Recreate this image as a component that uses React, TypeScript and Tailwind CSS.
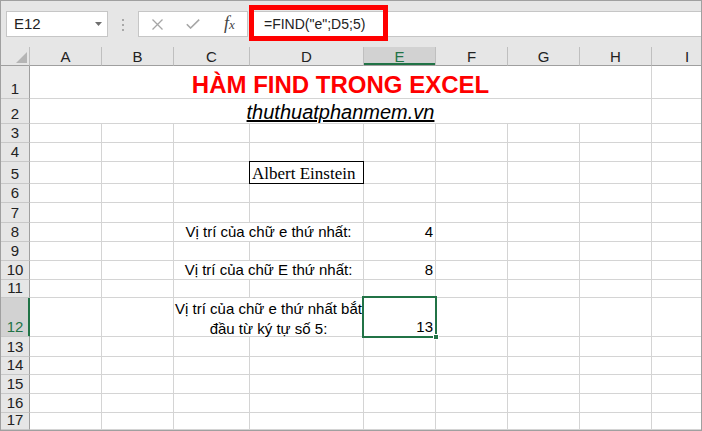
import type { ReactNode } from "react";

const COLS = ["A", "B", "C", "D", "E", "F", "G", "H", "I"];
const ROWS = Array.from({ length: 17 }, (_, i) => i + 1);

type CellProps = {
  last?: boolean;
  span?: number;
  className?: string;
  children?: ReactNode;
};

function Cell({ last = false, span = 1, className = "", children }: CellProps) {
  return (
    <div
      className={`${last ? "" : "border-r"} border-b border-[#d4d4d4] bg-white ${
        span === 8 ? "col-span-8" : span === 2 ? "col-span-2" : ""
      } ${className}`}
    >
      {children}
    </div>
  );
}

function RowHead({ n, active = false }: { n: number; active?: boolean }) {
  return (
    <div
      className={`flex items-end justify-center border-b border-b-[#c8c8c8] text-[15px] leading-[18px] ${
        active
          ? "bg-[#d2d2d2] border-r border-r-[#217346] shadow-[inset_-1px_0_0_#217346] text-[#217346]"
          : "bg-[#e6e6e6] border-r border-r-[#9f9f9f] text-[#222]"
      }`}
    >
      {n}
    </div>
  );
}

function ColHead({ label }: { label: string }) {
  const active = label === "E";
  const last = label === "I";
  return (
    <div
      className={`flex items-center border-b border-b-[#9f9f9f] text-[15px] leading-[17px] ${
        last ? "justify-start pl-[33px]" : "justify-center border-r border-r-[#bfbfbf]"
      } ${
        active
          ? "bg-[#d2d2d2] text-[#217346] shadow-[inset_0_-2px_0_#217346]"
          : "bg-[#e6e6e6] text-[#222]"
      }`}
    >
      {label}
    </div>
  );
}

function NumberCell({ value }: { value?: string }) {
  return (
    <Cell className="flex items-end justify-end pr-[2px] text-[15px] leading-[19px] text-black">
      {value}
    </Cell>
  );
}

function LabelCell({ children }: { children: ReactNode }) {
  return (
    <Cell span={2} className="flex items-end justify-center text-[15px] leading-[19px] text-black">
      {children}
    </Cell>
  );
}

function Plain({ from, to }: { from: number; to: number }) {
  return (
    <>
      {COLS.slice(from, to).map((c) => (
        <Cell key={c} last={c === "I"} />
      ))}
    </>
  );
}

function RowCells({ r }: { r: number }) {
  if (r === 1) {
    return (
      <>
        <Cell span={8} className="flex items-end justify-center text-[24px] font-bold leading-[26px] text-[#ff0000]">
          HÀM FIND TRONG EXCEL
        </Cell>
        <Cell last />
      </>
    );
  }
  if (r === 2) {
    return (
      <>
        <Cell span={8} className="flex items-end justify-center text-[20px] italic leading-[22px] text-black">
          <span className="underline">thuthuatphanmem.vn</span>
        </Cell>
        <Cell last />
      </>
    );
  }
  if (r === 5) {
    return (
      <>
        <Plain from={0} to={3} />
        <Cell className="relative flex items-end pl-[2px] font-['Liberation_Serif',serif] text-[17px] leading-[19px] text-black">
          <div className="absolute -left-px -top-px -right-px -bottom-px border border-black" />
          Albert Einstein
        </Cell>
        <Plain from={4} to={9} />
      </>
    );
  }
  if (r === 8 || r === 10) {
    return (
      <>
        <Plain from={0} to={2} />
        <LabelCell>
          {r === 8 ? "Vị trí của chữ e thứ nhất:" : "Vị trí của chữ E thứ nhất:"}
        </LabelCell>
        <NumberCell value={r === 8 ? "4" : "8"} />
        <Plain from={5} to={9} />
      </>
    );
  }
  if (r === 12) {
    return (
      <>
        <Plain from={0} to={2} />
        <Cell span={2} className="flex items-end justify-center text-[15px] leading-[20px] text-black">
          <div className="-mb-[3px] text-center">
            Vị trí của chữ e thứ nhất bắt
            <br />
            đầu từ ký tự số 5:
          </div>
        </Cell>
        <Cell className="relative flex items-end justify-end pr-[2px] text-[15px] leading-[19px] text-black">
          <div className="absolute -left-[2px] -top-[2px] -right-[2px] -bottom-[2px] border-2 border-[#217346]" />
          <div className="absolute -right-[4px] -bottom-[4px] h-[6px] w-[6px] border border-white bg-[#217346]" />
          13
        </Cell>
        <Plain from={5} to={9} />
      </>
    );
  }
  return <Plain from={0} to={9} />;
}

function Toolbar() {
  return (
    <div className="flex h-[46px] items-start bg-[#e6e6e6] pt-[10px]">
      <div className="ml-[5px] flex h-[26px] w-[102px] items-center justify-between border border-[#c6c6c6] bg-white pl-[7px] pr-[5px]">
        <span className="text-[15px] leading-[18px] text-[#222]">E12</span>
        <svg width="7" height="4" viewBox="0 0 7 4">
          <path d="M0 0h7L3.5 4z" fill="#6e6e6e" />
        </svg>
      </div>
      <div className="ml-[14px] mt-[8px] flex w-[2px] flex-col gap-[3px]">
        <span className="h-[2px] w-[2px] bg-[#a8a8a8]" />
        <span className="h-[2px] w-[2px] bg-[#a8a8a8]" />
        <span className="h-[2px] w-[2px] bg-[#a8a8a8]" />
      </div>
      <div className="ml-[14px] flex h-[26px] w-[110px] items-center border border-[#c6c6c6] bg-white">
        <svg className="ml-[13px]" width="11" height="11" viewBox="0 0 11 11">
          <path d="M0.5 0.5l10 10M10.5 0.5l-10 10" stroke="#a6a6a6" strokeWidth="1.3" />
        </svg>
        <svg className="ml-[23px]" width="14" height="10" viewBox="0 0 14 10">
          <path d="M0.8 5.2l3.8 3.8L13.2 0.6" stroke="#a6a6a6" strokeWidth="1.6" fill="none" />
        </svg>
        <span className="ml-[24px] font-['Liberation_Serif',serif] italic leading-[18px] text-[#444]">
          <span className="text-[18px]">f</span>
          <span className="text-[13px]">x</span>
        </span>
      </div>
      <div className="ml-[5px] flex h-[26px] flex-1 items-center border-y border-l border-[#c6c6c6] bg-white pl-[10px]">
        <span className="text-[14px] leading-[18px] text-[#222]">=FIND("e";D5;5)</span>
      </div>
    </div>
  );
}

export default function App() {
  return (
    <div className="relative h-[431px] w-[702px] overflow-hidden border border-[#a0a0a0] bg-[#e6e6e6] font-['Liberation_Sans',Arial,sans-serif]">
      <Toolbar />
      <div className="grid grid-cols-[29px_72px_72px_76px_114px_72px_72px_72px_72px_49px] grid-rows-[19px_33px_25px_19px_19px_22px_19px_20px_19px_19px_19px_18px_39px_20px_18px_19px_19px_17px]">
        <div className="flex items-end justify-end border-r border-b border-r-[#bfbfbf] border-b-[#9f9f9f] bg-[#e6e6e6] pb-[2px] pr-[2px]">
          <svg width="11" height="11" viewBox="0 0 11 11">
            <path d="M11 0V11H0z" fill="#b5b5b5" />
          </svg>
        </div>
        {COLS.map((c) => (
          <ColHead key={c} label={c} />
        ))}
        {ROWS.map((r) => (
          <div key={r} className="contents">
            <RowHead n={r} active={r === 12} />
            <RowCells r={r} />
          </div>
        ))}
      </div>
      <div className="absolute left-[248px] top-[4px] h-[36px] w-[139px] border-[5px] border-[#ff0000]" />
    </div>
  );
}
